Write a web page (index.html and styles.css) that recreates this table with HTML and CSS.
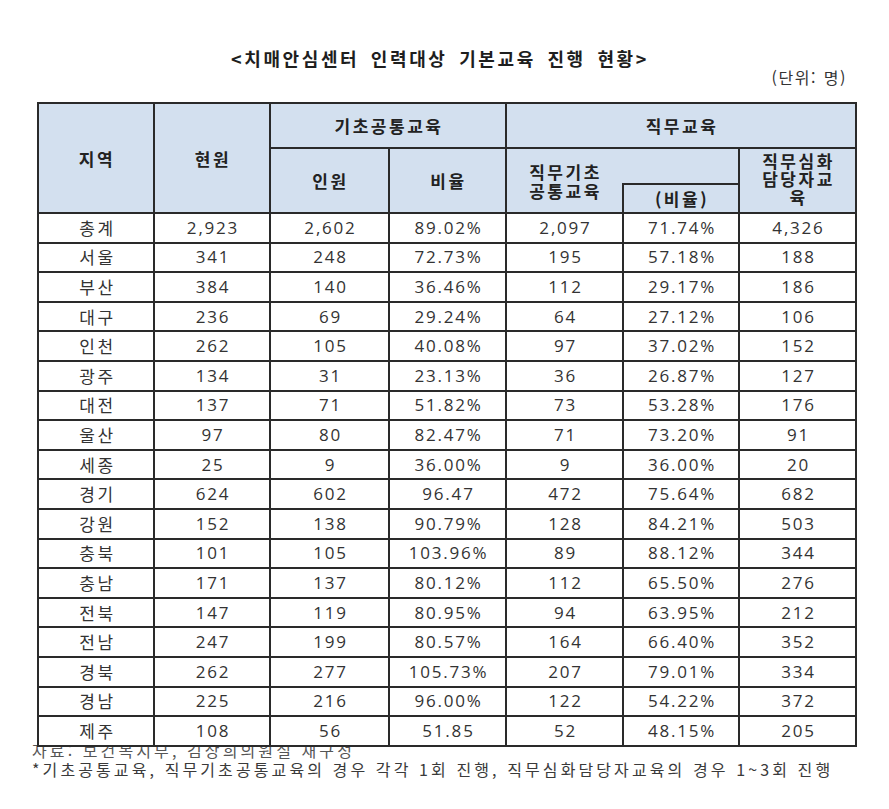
FILE: index.html
```html
<!DOCTYPE html>
<html lang="ko">
<head>
<meta charset="utf-8">
<title>치매안심센터 인력대상 기본교육 진행 현황</title>
<link rel="stylesheet" href="styles.css">
</head>
<body>
<div class="page">
  <h1 class="title">&lt;치매안심센터 인력대상 기본교육 진행 현황&gt;</h1>
  <div class="unit">(단위: 명)</div>
  <table class="stats">
    <colgroup>
      <col class="c1"><col class="c2"><col class="c3"><col class="c4"><col class="c5"><col class="c6"><col class="c7">
    </colgroup>
    <thead>
      <tr class="h1row">
        <th rowspan="3">지역</th>
        <th rowspan="3">현원</th>
        <th colspan="2">기초공통교육</th>
        <th colspan="3">직무교육</th>
      </tr>
      <tr class="h2row">
        <th rowspan="2">인원</th>
        <th rowspan="2">비율</th>
        <th rowspan="2" class="jm">직무기초<br>공통교육</th>
        <th class="blank"></th>
        <th rowspan="2" class="tight">직무심화<br>담당자교<br>육</th>
      </tr>
      <tr class="h3row">
        <th>(비율)</th>
      </tr>
    </thead>
    <tbody>
      <tr><td class="rg">총계</td><td>2,923</td><td>2,602</td><td>89.02%</td><td>2,097</td><td>71.74%</td><td>4,326</td></tr>
      <tr><td class="rg">서울</td><td>341</td><td>248</td><td>72.73%</td><td>195</td><td>57.18%</td><td>188</td></tr>
      <tr><td class="rg">부산</td><td>384</td><td>140</td><td>36.46%</td><td>112</td><td>29.17%</td><td>186</td></tr>
      <tr><td class="rg">대구</td><td>236</td><td>69</td><td>29.24%</td><td>64</td><td>27.12%</td><td>106</td></tr>
      <tr><td class="rg">인천</td><td>262</td><td>105</td><td>40.08%</td><td>97</td><td>37.02%</td><td>152</td></tr>
      <tr><td class="rg">광주</td><td>134</td><td>31</td><td>23.13%</td><td>36</td><td>26.87%</td><td>127</td></tr>
      <tr><td class="rg">대전</td><td>137</td><td>71</td><td>51.82%</td><td>73</td><td>53.28%</td><td>176</td></tr>
      <tr><td class="rg">울산</td><td>97</td><td>80</td><td>82.47%</td><td>71</td><td>73.20%</td><td>91</td></tr>
      <tr><td class="rg">세종</td><td>25</td><td>9</td><td>36.00%</td><td>9</td><td>36.00%</td><td>20</td></tr>
      <tr><td class="rg">경기</td><td>624</td><td>602</td><td>96.47</td><td>472</td><td>75.64%</td><td>682</td></tr>
      <tr><td class="rg">강원</td><td>152</td><td>138</td><td>90.79%</td><td>128</td><td>84.21%</td><td>503</td></tr>
      <tr><td class="rg">충북</td><td>101</td><td>105</td><td>103.96%</td><td>89</td><td>88.12%</td><td>344</td></tr>
      <tr><td class="rg">충남</td><td>171</td><td>137</td><td>80.12%</td><td>112</td><td>65.50%</td><td>276</td></tr>
      <tr><td class="rg">전북</td><td>147</td><td>119</td><td>80.95%</td><td>94</td><td>63.95%</td><td>212</td></tr>
      <tr><td class="rg">전남</td><td>247</td><td>199</td><td>80.57%</td><td>164</td><td>66.40%</td><td>352</td></tr>
      <tr><td class="rg">경북</td><td>262</td><td>277</td><td>105.73%</td><td>207</td><td>79.01%</td><td>334</td></tr>
      <tr><td class="rg">경남</td><td>225</td><td>216</td><td>96.00%</td><td>122</td><td>54.22%</td><td>372</td></tr>
      <tr><td class="rg">제주</td><td>108</td><td>56</td><td>51.85</td><td>52</td><td>48.15%</td><td>205</td></tr>
    </tbody>
  </table>
  <p class="note source">자료: 보건복지부, 김상희의원실 재구성</p>
  <p class="note">*기초공통교육, 직무기초공통교육의 경우 각각 1회 진행, 직무심화담당자교육의 경우 1~3회 진행</p>
</div>
</body>
</html>
```

FILE: styles.css
```css
html, body {
  margin: 0;
  padding: 0;
  background: #ffffff;
}

body {
  font-family: "Open Sans", "Noto Sans CJK KR", sans-serif;
  color: #333333;
}

.page {
  width: 818px;
  padding: 46px 0 0 37px;
}

.title {
  margin: 0;
  font-family: "Noto Sans CJK KR", sans-serif;
  font-size: 18px;
  font-weight: 700;
  line-height: 24px;
  letter-spacing: 2.6px;
  word-spacing: 4px;
  text-align: center;
  color: #1e1e1e;
  padding-right: 12px;
}

.unit {
  margin-top: -3px;
  text-align: right;
  padding-right: 8px;
  font-family: "Noto Sans CJK KR", sans-serif;
  font-size: 16px;
  line-height: 20px;
  letter-spacing: 1.5px;
  word-spacing: 1px;
  color: #333333;
}

.stats {
  margin-top: 15px;
  width: 818px;
  table-layout: fixed;
  border-collapse: collapse;
  border: 2px solid #222222;
  position: relative;
  z-index: 1;
  background: #ffffff;
}

.c1 { width: 116px; }
.c2 { width: 116px; }
.c3 { width: 119px; }
.c4 { width: 117px; }
.c5 { width: 117px; }
.c6 { width: 116px; }
.c7 { width: 117px; }

.stats th,
.stats td {
  border: 2px solid #2a2a2a;
  padding: 0;
  text-align: center;
  vertical-align: middle;
}

.stats th {
  background: #d3e0ef;
  font-family: "Noto Sans CJK KR", sans-serif;
  font-size: 17px;
  font-weight: 700;
  letter-spacing: 2.5px;
  line-height: 19px;
  color: #222222;
  padding-left: 2px;
}

.h1row { height: 45px; }
.h2row { height: 36px; }
.h3row { height: 29px; }

.stats th.blank {
  border-left: hidden;
}

.stats th.tight {
  line-height: 18px;
  padding-top: 0;
  padding-bottom: 3px;
}

.stats td {
  height: 29.6px;
  box-sizing: border-box;
  font-size: 17px;
  line-height: 20px;
  letter-spacing: 1.8px;
  padding-left: 2px;
  color: #333333;
  background: #ffffff;
}

.stats td.rg {
  font-family: "Noto Sans CJK KR", sans-serif;
  letter-spacing: 2.5px;
  padding-left: 3px;
}

.note {
  margin: 0;
  font-family: "Noto Sans CJK KR", sans-serif;
  font-size: 16px;
  line-height: 19px;
  letter-spacing: 3.1px;
  color: #3a3a3a;
  margin-left: -5px;
  white-space: nowrap;
}

.source {
  margin-top: -6px;
  color: #555555;
}
```
